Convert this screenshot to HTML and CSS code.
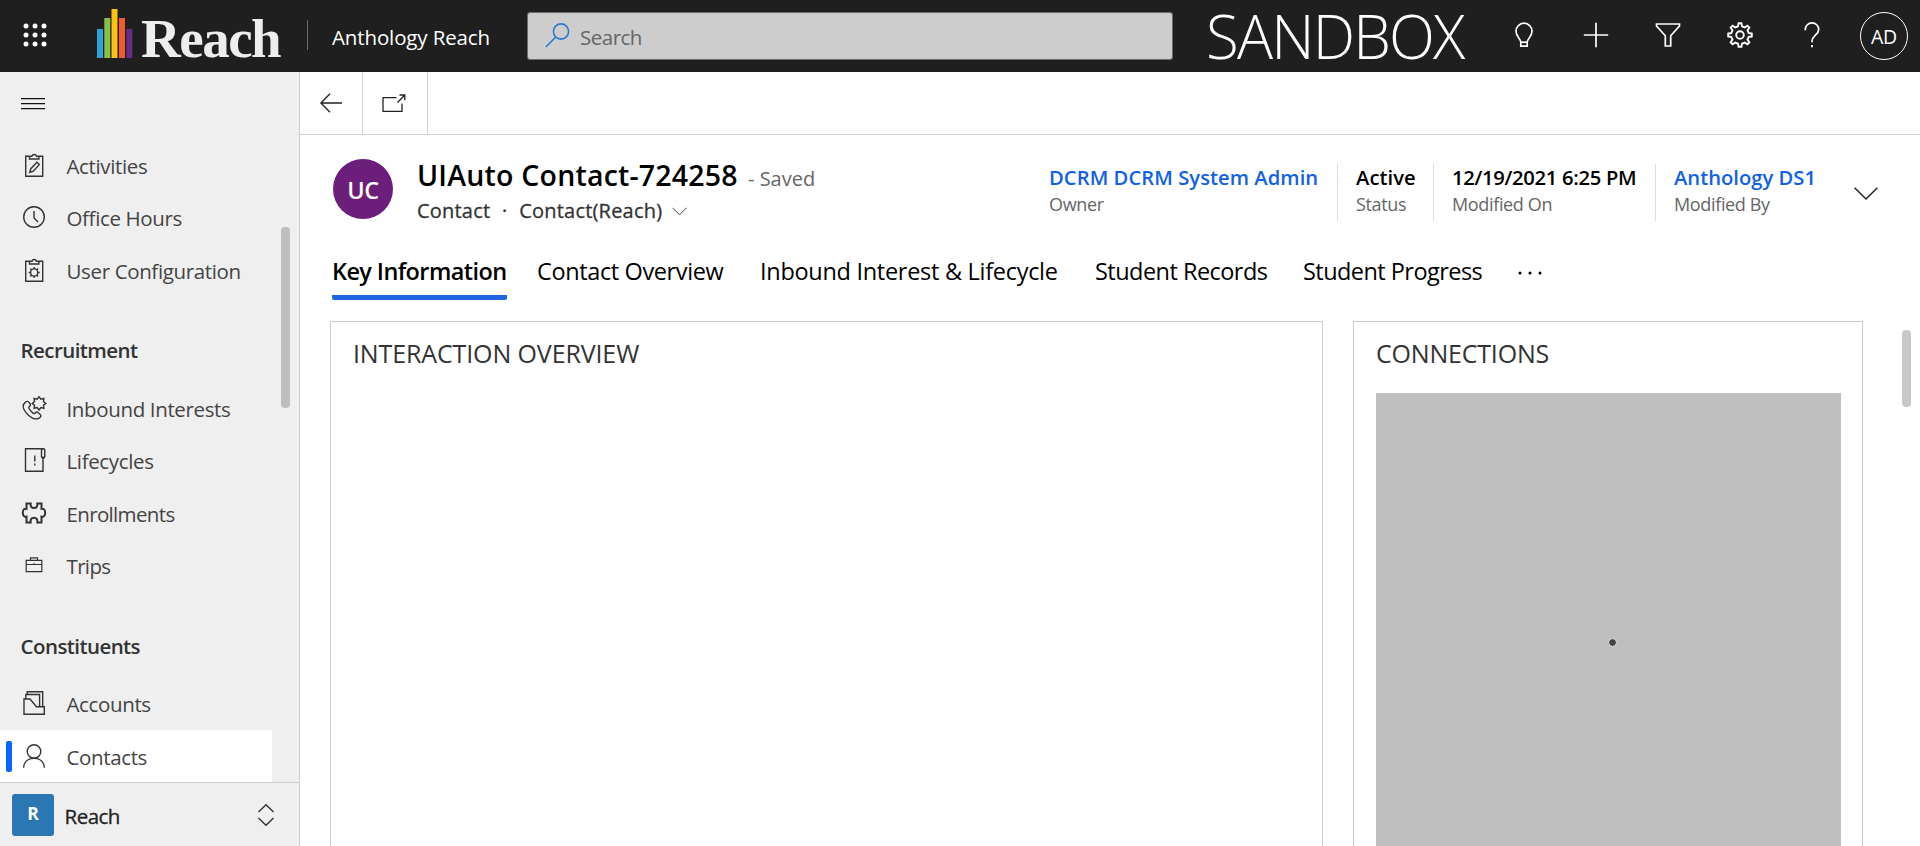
FILE: index.html
```html
<!DOCTYPE html>
<html lang="en">
<head>
<meta charset="utf-8">
<title>Anthology Reach</title>
<link rel="stylesheet" href="styles.css">
</head>
<body>
<header class="topbar">
  <svg class="waffle" viewBox="0 0 24 24"><g fill="#fff"><circle cx="3" cy="3" r="2.5"/><circle cx="12" cy="3" r="2.5"/><circle cx="21" cy="3" r="2.5"/><circle cx="3" cy="12" r="2.5"/><circle cx="12" cy="12" r="2.5"/><circle cx="21" cy="12" r="2.5"/><circle cx="3" cy="21" r="2.5"/><circle cx="12" cy="21" r="2.5"/><circle cx="21" cy="21" r="2.5"/></g></svg>
  <div class="logo">
    <svg class="logo-bars" viewBox="0 0 36 49"><path fill="#2ba3d8" d="M0 20h6v29H0z"/><path fill="#85c04b" d="M7.3 9h6v40h-6z"/><path fill="#fdc214" d="M14.500 0h6v49h-6z"/><path fill="#f15b2a" d="M22 9h6v40h-6z"/><path fill="#633087" d="M29.300 20h6v29h-6z"/></svg>
    <span class="logo-word">Reach</span>
  </div>
  <span class="top-divider"></span>
  <span class="app-name">Anthology Reach</span>
  <div class="search">
    <svg class="search-icon" viewBox="0 0 25 25" fill="none" stroke="#2f78cf" stroke-width="1.600"><circle cx="16" cy="8.500" r="7.600"/><path d="M10.800 14 .8 24"/></svg>
    <span class="search-text">Search</span>
  </div>
  <span class="sandbox">SANDBOX</span>
  <nav class="actions">
    <svg viewBox="0 0 26 26" fill="none" stroke="#fff" stroke-width="1.700"><path d="M9.800 24.200V20c0-3-4.800-5.500-4.800-10.800a8 8 0 0 1 16 0C21 14.500 16.200 17 16.200 20v4.200z"/><path d="M9.800 20.200h6.400"/></svg>
    <svg viewBox="0 0 26 26" fill="none" stroke="#fff" stroke-width="1.700"><path d="M13 .8v24.400M.8 13h24.400"/></svg>
    <svg viewBox="0 0 26 26" fill="none" stroke="#fff" stroke-width="1.700"><path d="M1.500 2h23v2l-8.800 9.800V24h-5.400V13.800L1.500 4z"/></svg>
    <svg viewBox="0 0 26 26" fill="none" stroke="#fff" stroke-width="1.900"><path d="M21.680 11.030L24.800 11.560V14.440L21.680 14.970L20.530 17.750L22.360 20.330L20.330 22.360L17.750 20.530L14.970 21.680L14.440 24.800H11.560L11.030 21.680L8.250 20.530L5.670 22.360L3.640 20.330L5.470 17.750L4.320 14.970L1.200 14.440V11.560L4.320 11.030L5.470 8.250L3.640 5.670L5.670 3.640L8.250 5.470L11.030 4.320L11.560 1.200H14.440L14.970 4.320L17.750 5.470L20.330 3.640L22.360 5.670L20.530 8.250z"/><circle cx="13" cy="13" r="3.800"/></svg>
    <svg viewBox="0 0 26 26" fill="none" stroke="#fff" stroke-width="1.700"><path d="M6.300 8.200V7.500a6.700 6.700 0 0 1 13.400 0c0 5.500-6.700 6-6.700 11.800v1"/><path d="M13 23v2.300" stroke-width="2"/></svg>
  </nav>
  <div class="user"><span>AD</span></div>
</header>

<div class="body">
  <aside class="sidebar">
    <div class="nav">
      <div class="menu"><svg viewBox="0 0 24 12"><path fill="#111" d="M0 0h24v1.200H0zM0 5h24v1.200H0zM0 10h24v1.200H0z"/></svg></div>
      <a class="item"><svg viewBox="0 0 24 24"><path d="M8 3.200H3.700v20h17v-20H16M7.500 6V3.200h2.400a2.400 2.400 0 0 1 4.600 0h2.400V6z"/><path d="M7.800 19.300l1-3.600 6.200-6.400 2.300 2.300-6 6.500z"/></svg><span>Activities</span></a>
      <a class="item"><svg viewBox="0 0 24 24"><circle cx="12" cy="12" r="10.300"/><path d="M12 6v7l4 4"/></svg><span>Office Hours</span></a>
      <a class="item"><svg viewBox="0 0 24 24"><path d="M8 3.200H3.700v20h17v-20H16M7.500 6V3.200h2.400a2.400 2.400 0 0 1 4.600 0h2.400V6z"/><circle cx="12.200" cy="14.500" r="3.600"/><path d="M12.200 9v2M12.200 18v2M6.700 14.500h2M15.700 14.500h2M8.300 10.600l1.400 1.400M14.700 17l1.400 1.400M16.100 10.600 14.700 12M9.700 17l-1.400 1.400"/></svg><span>User Configuration</span></a>
      <h2 class="group">Recruitment</h2>
      <a class="item"><svg viewBox="0 0 24 24"><path d="M3.200 6.400C.6 8.500.4 12 3.600 16.200c4 5.400 9.500 8.400 14 5.600 1.500-1 1.800-2.200.6-3.400l-2-1.700c-1-.9-2-.7-2.900.3-.7.8-1.400.8-2.300.1-2-1.500-3.200-3-4.100-4.800-.4-.9-.1-1.400.6-1.900 1-.7 1.200-1.700.5-2.700L6.500 5.900c-.9-1-2.200-.5-3.300.5z"/><path d="M17 .8l1.900 2.400 3-.7-.4 3 2.300 1.900-2.300 1.900.4 3-3-.7-1.900 2.400-1.900-2.400-3 .7.400-3-2.300-1.900 2.300-1.900-.4-3 3 .7z"/></svg><span>Inbound Interests</span></a>
      <a class="item"><svg viewBox="0 0 24 24"><path d="M21 8.500V23.300H3.500V.8h18c-1.300 0-2 .5-2 1.700v6.300l1.700 2 1.600-2V2.500c0-1-.5-1.700-1.300-1.700M12.800 7.500v6M12.800 15.500v2"/></svg><span>Lifecycles</span></a>
      <a class="item"><svg viewBox="0 0 24 24" class="bold"><path d="M4.500 2.500h4.200c-.4 3 .8 4.500 3.300 4.500s3.700-1.500 3.300-4.500h4.200v5.300c2-.6 3.700.9 3.700 3.900s-1.700 4.700-3.700 4v5.800h-4.200c.4-3.300-.8-4.800-3.300-4.800s-3.700 1.500-3.300 4.800H4.500v-5.800c-2 .7-3.700-1-3.700-4s1.700-4.500 3.700-3.900z"/></svg><span class="tight">Enrollments</span></a>
      <a class="item"><svg viewBox="0 0 24 24" class="thin"><path d="M4.200 7.300h15.600v11.400H4.200zM4.200 11.500h15.600M8.500 7.300V4.800h7v2.500M12 10v2"/></svg><span class="tight">Trips</span></a>
      <h2 class="group">Constituents</h2>
      <a class="item"><svg viewBox="0 0 24 24"><path d="M2 23.300V8h6l6.500 7.800h7.800v7.500zM3.800 8V3.500h13.800v12.300M5.200 3.500V.8h15.500v15"/></svg><span>Accounts</span></a>
      <a class="item selected"><svg viewBox="0 0 24 24"><circle cx="12" cy="7.500" r="6.800"/><path d="M1.600 23.800C2 18 6 14.300 12 14.300S22 18 22.400 23.800"/></svg><span>Contacts</span></a>
      <i class="nav-thumb"></i>
    </div>
    <div class="area">
      <span class="area-tile">R</span>
      <span class="area-name">Reach</span>
      <svg viewBox="0 0 16 22" fill="none" stroke="#333" stroke-width="1.400"><path d="M.5 8 8 .8 15.500 8M.5 14 8 21.200 15.500 14"/></svg>
    </div>
  </aside>

  <main class="main">
    <div class="commands">
      <span class="cmd back"><svg viewBox="0 0 22 20" fill="none" stroke="#222" stroke-width="1.300"><path d="M22 10H1M10 .7.900 10l9.100 9.300"/></svg></span>
      <span class="cmd pop"><svg viewBox="0 0 24 18" fill="none" stroke="#222" stroke-width="1.300"><path d="M14.500 3.700H1v13.600h19V9.500M15.500 8.500 22.800 1M17.500 1h5.300v5.200"/></svg></span>
    </div>
    <section class="record">
      <div class="avatar">UC</div>
      <div class="titles">
        <div class="title-row"><h1>UIAuto Contact-724258</h1><span class="saved">- Saved</span></div>
        <div class="sub-row"><span>Contact</span><span class="dot">·</span><span>Contact(Reach)</span><svg viewBox="0 0 15 9" fill="none" stroke="#444" stroke-width="1"><path d="M.5.8l7 7 7-7"/></svg></div>
      </div>
      <div class="facts">
        <div class="fact f1"><b class="link">DCRM DCRM System Admin</b><span>Owner</span></div>
        <div class="fact f2"><b>Active</b><span>Status</span></div>
        <div class="fact f3"><b>12/19/2021 6:25 PM</b><span>Modified On</span></div>
        <div class="fact f4"><b class="link">Anthology DS1</b><span>Modified By</span></div>
        <svg class="expand" viewBox="0 0 24 13" fill="none" stroke="#222" stroke-width="1.500"><path d="M.6.800 12 12 23.400.8"/></svg>
      </div>
    </section>
    <nav class="tabs">
      <span class="tab active">Key Information</span>
      <span class="tab t2">Contact Overview</span>
      <span class="tab t3">Inbound Interest &amp; Lifecycle</span>
      <span class="tab t4">Student Records</span>
      <span class="tab t5">Student Progress</span>
      <svg class="more" viewBox="0 0 24 4"><circle cx="2" cy="2" r="1.500"/><circle cx="12" cy="2" r="1.500"/><circle cx="22" cy="2" r="1.500"/></svg>
    </nav>
    <div class="cards">
      <section class="card wide"><h3>INTERACTION OVERVIEW</h3></section>
      <section class="card narrow"><h3>CONNECTIONS</h3><div class="loading"><i></i></div></section>
      <i class="main-thumb"></i>
    </div>
  </main>
</div>
</body>
</html>
```
FILE: styles.css
```css
* { box-sizing: border-box; }
body { margin: 0; width: 1920px; height: 846px; overflow: hidden; font-family: "Open Sans", "Noto Sans", sans-serif; color: #000; background: #fff; display: flex; flex-direction: column; }
svg { display: block; flex: none; overflow: visible; }
span, b, h1 { white-space: nowrap; }

.topbar { height: 72px; flex: none; background: #1f1f1f; color: #fff; display: flex; align-items: center; }
.waffle { width: 24px; height: 24px; margin: 0 0 2px 23px; }
.logo { display: flex; align-items: flex-end; margin-left: 50px; width: 210px; height: 52px; }
.logo-bars { width: 36px; height: 49px; margin-bottom: 4px; }
.logo-word { font: bold 55px/50px "Liberation Serif", serif; letter-spacing: -1.500px; color: #ededed; margin: 0 0 -2px 8px; }
.top-divider { width: 1px; height: 30px; background: #6a6a6a; margin-bottom: 2px; }
.app-name { font-size: 20.500px; line-height: 30px; letter-spacing: -.13px; margin-left: 24px; width: 195px; padding-top: 1px; }
.search { width: 646px; height: 48px; background: #cdcdcd; border: 1px solid #6c6c6c; border-radius: 3px; display: flex; align-items: center; padding-left: 17px; color: #666; }
.search-icon { width: 25px; height: 25px; margin-bottom: 1px; }
.search-text { font-size: 20.500px; letter-spacing: -.5px; margin-left: 10px; padding-top: 2px; }
.sandbox { font-size: 60px; font-weight: 300; line-height: 72px; letter-spacing: -1.800px; width: 304px; margin-left: 33px; }
.actions { display: flex; gap: 46px; margin: 0 0 3px 1px; }
.actions svg { width: 26px; height: 26px; }
.user { width: 48px; height: 48px; border: 1px solid #fff; border-radius: 50%; margin-left: 35px; font-size: 19.500px; letter-spacing: -.3px; display: flex; align-items: center; justify-content: center; padding-top: 1px; }

.body { flex: 1; display: flex; min-height: 0; }
.sidebar { width: 300px; flex: none; background: #efefef; border-right: 1px solid #cfcfcf; display: flex; flex-direction: column; }
.nav { height: 710px; flex: none; position: relative; }
.menu { height: 66.200px; padding: 26px 0 0 21px; }
.menu svg { width: 24px; height: 12px; }
.item { display: flex; align-items: center; height: 52.640px; width: 272px; padding-left: 22px; gap: 20.500px; font-size: 20.500px; letter-spacing: -.36px; color: #444; }
.item svg { width: 24px; height: 24px; fill: none; stroke: #333; stroke-width: 1.400; }
.item svg.bold { stroke-width: 2; }
.item svg.thin { stroke-width: 1.200; }
.item span { padding-top: 2px; }
.item .tight { letter-spacing: -.65px; }
.group { height: 85.200px; margin: 0; padding: 39px 0 0 20.600px; font-size: 20.500px; line-height: 30px; letter-spacing: -.58px; font-weight: 600; color: #333; }
.selected { background: #fff; position: relative; }
.selected::before { content: ""; position: absolute; left: 6px; top: 11px; width: 6px; height: 31px; border-radius: 2px; background: #0866ff; }
.nav-thumb { position: absolute; left: 281px; top: 155px; width: 9px; height: 181px; border-radius: 4px; background: #bebebe; }
.area { flex: 1; border-top: 1px solid #cfcfcf; display: flex; align-items: center; padding-left: 12px; font-size: 20.500px; }
.area-tile { width: 42px; height: 42px; border-radius: 3px; background: #2b77b3; color: #fff; font-size: 17.500px; font-weight: 700; text-align: center; line-height: 38px; }
.area-name { margin-left: 10.500px; width: 193px; color: #222; letter-spacing: -.5px; padding-top: 2px; -webkit-text-stroke: .3px #222; }
.area svg { width: 16px; height: 22px; }

.main { flex: 1; min-width: 0; display: flex; flex-direction: column; }
.commands { height: 63px; flex: none; border-bottom: 1px solid #d2d2d2; display: flex; }
.cmd { border-right: 1px solid #d2d2d2; display: flex; align-items: center; }
.back { width: 63px; padding-left: 20px; }
.back svg { width: 22px; height: 20px; }
.pop { width: 65px; padding-left: 19px; }
.pop svg { width: 24px; height: 18px; }
.record { height: 119px; flex: none; display: flex; padding: 24px 0 0 33px; }
.avatar { width: 60px; height: 60px; border-radius: 50%; background: #6b1f7a; color: #fff; font-size: 23.500px; font-weight: 600; letter-spacing: -.5px; display: flex; align-items: center; justify-content: center; padding-top: 2px; }
.titles { margin-left: 24px; width: 632px; margin-top: -1px; }
.title-row { display: flex; align-items: baseline; }
h1 { font-size: 28.500px; line-height: 34px; font-weight: 600; letter-spacing: .2px; margin: 0; width: 331px; }
.saved { font-size: 20px; color: #666; }
.sub-row { display: flex; align-items: center; font-size: 20px; line-height: 30px; margin-top: 4px; color: #333; letter-spacing: .2px; -webkit-text-stroke: .3px #333; }
.dot { width: 29px; text-align: center; }
.sub-row svg { width: 15px; height: 9px; margin-left: 10px; }
.facts { display: flex; padding-top: 5px; }
.fact { height: 57px; border-right: 1px solid #ddd; }
.fact b, .fact > span { display: block; }
.fact b { font-size: 20.200px; line-height: 27px; font-weight: 600; letter-spacing: .05px; }
.fact .link { color: #1160e8; }
.fact > span { font-size: 18px; line-height: 26px; color: #666; letter-spacing: -.35px; }
.f1 { width: 289px; }
.f2 { width: 96px; padding-left: 18px; }
.f3 { width: 222px; padding-left: 18px; }
.fact.f3 b { letter-spacing: -.3px; }
.f4 { width: 198px; padding-left: 18px; border: 0; }
.f4 b { letter-spacing: 0; }
.expand { width: 24px; height: 13px; margin-top: 23px; }
.tabs { height: 67px; flex: none; display: flex; padding-left: 32px; font-size: 23.500px; line-height: 35px; }
.tab { height: 46px; }
.active { width: 175px; border-bottom: 5px solid #2266e3; border-radius: 2px; font-weight: 600; letter-spacing: -.6px; }
.t2 { margin-left: 30px; width: 223px; letter-spacing: -.38px; }
.t3 { width: 335px; letter-spacing: -.29px; }
.t4 { width: 208px; letter-spacing: -.53px; }
.t5 { width: 215px; letter-spacing: -.55px; }
.more { width: 24px; height: 4px; margin-top: 17px; }
.cards { flex: 1; display: flex; padding-left: 30px; min-height: 0; }
.card { border: 1px solid #ccc; border-bottom: 0; padding: 0 21px 0 22px; display: flex; flex-direction: column; }
.wide { width: 993px; }
.narrow { width: 510px; margin-left: 30px; }
h3 { margin: 0; height: 71px; padding-top: 13px; font-size: 25px; line-height: 36px; font-weight: 400; letter-spacing: -.12px; color: #333; }
.narrow h3 { letter-spacing: -.2px; }
.loading { flex: 1; background: #bfbfbf; display: flex; justify-content: center; padding: 246px 0 0 7px; }
.loading i { width: 7px; height: 7px; border-radius: 50%; background: #444; outline: 1px solid #d0d0d0; }
.main-thumb { width: 9px; height: 77px; border-radius: 4px; background: #c8c8c8; margin: 9px 0 0 39px; }
```
